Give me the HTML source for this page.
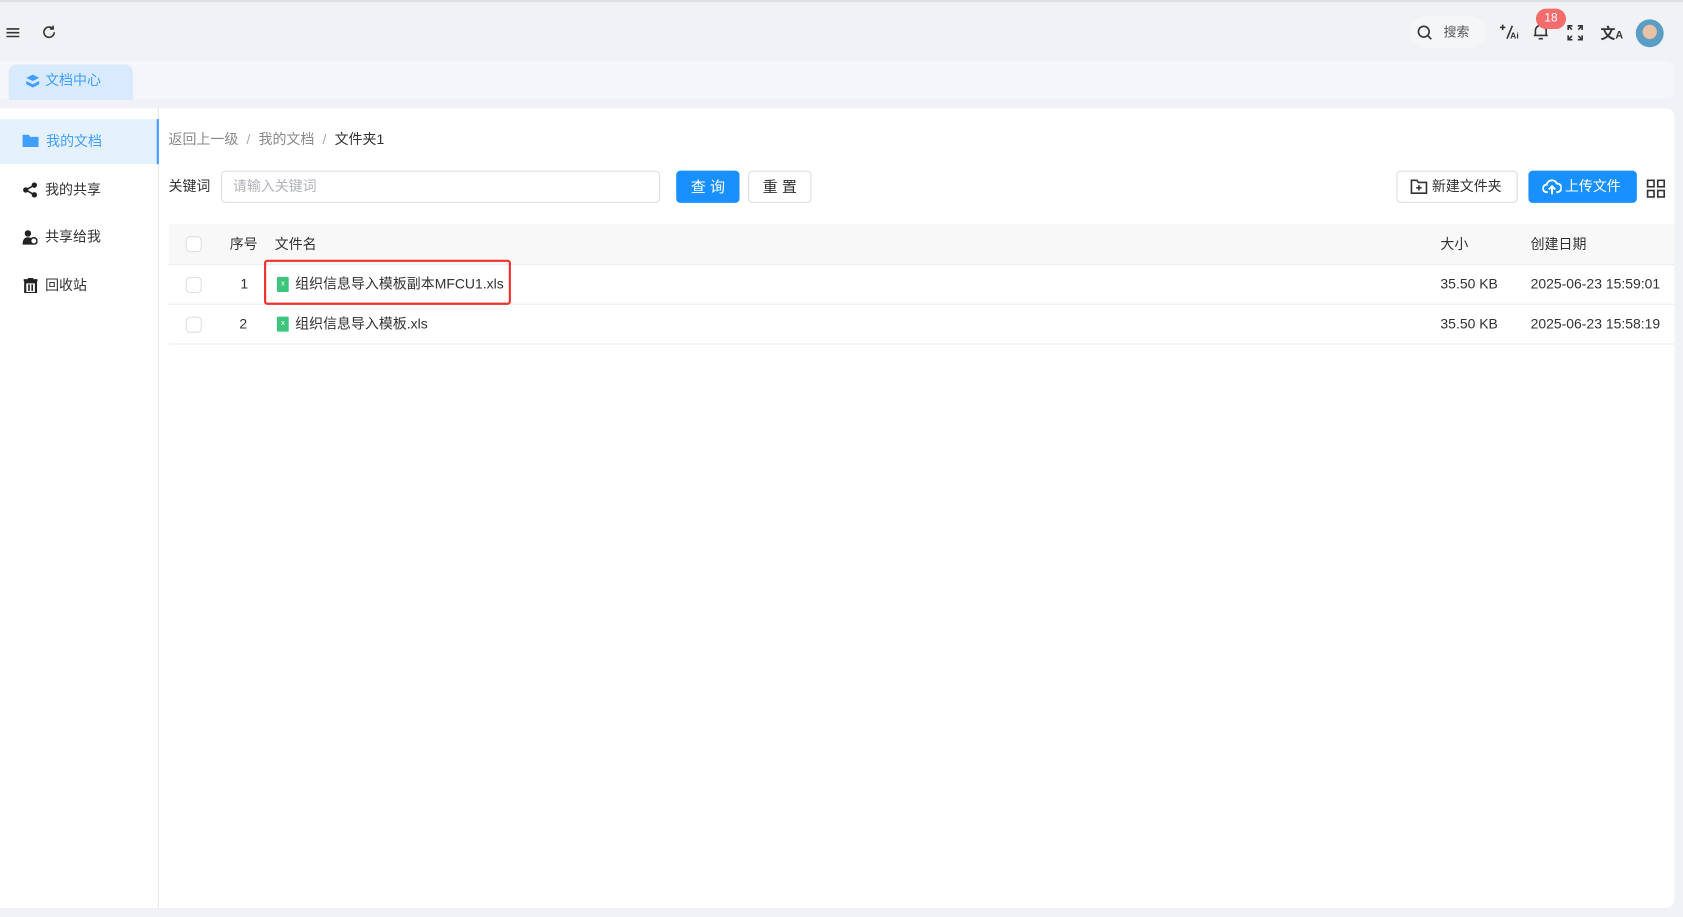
<!DOCTYPE html>
<html><head><meta charset="utf-8"><style>
*{box-sizing:border-box;margin:0;padding:0}
html,body{width:1683px;height:917px;overflow:hidden;background:#f0f2f5}
#w{position:absolute;left:0;top:0;width:1568px;height:854px;transform:scale(1.07334);transform-origin:0 0;font-family:"Liberation Sans","Noto Sans CJK SC",sans-serif;font-size:13px;color:#303133;border-top:2px solid #dcdfe6}
.a{position:absolute;line-height:18px;white-space:nowrap}
.ic{stroke:#333;fill:none;stroke-width:1.5}
</style></head><body><div id="w">
<!-- header -->
<svg class="a" style="left:6px;top:22px" width="13" height="13"><path d="M0 3h12M0 6.5h12M0 10h12" class="ic" stroke="#555" stroke-width="1.3"/></svg>
<svg class="a" style="left:39px;top:21px" width="14" height="14"><path d="M11.5 7a4.8 4.8 0 1 1-1.5-3.5M10.5 1v3h-3" class="ic" stroke="#555" stroke-width="1.3"/></svg>
<div class="a" style="left:1313px;top:13px;width:72px;height:30px;border-radius:15px;background:#f5f6f8"></div>
<svg class="a" style="left:1320px;top:21px" width="15" height="15"><circle cx="6.5" cy="6.5" r="5" class="ic" stroke="#555" stroke-width="1.3"/><path d="M10 10l3.5 3.5" class="ic" stroke="#555" stroke-width="1.3"/></svg>
<div class="a" style="left:1345px;top:19px;font-size:12px;color:#555">搜索</div>
<svg class="a" style="left:1397px;top:18px" width="18" height="18"><path d="M3 3v5M0.5 5.5h5M7 16l5-12" class="ic" stroke-width="1.4"/><text x="10" y="16" font-size="8" font-family="Liberation Sans" fill="#333" font-weight="bold">Ai</text></svg>
<svg class="a" style="left:1428px;top:19px" width="15" height="17"><path d="M2.5 12V7.5a5 5 0 0 1 10 0V12M1 12h13M5.5 15h4" class="ic" stroke-width="1.4"/></svg>
<div class="a" style="left:1431px;top:6px;width:28px;height:19px;border-radius:10px;background:#f56c6c;color:#fff;font-size:11px;text-align:center;line-height:19px">18</div>
<svg class="a" style="left:1460px;top:21px" width="15" height="15"><path d="M1 5V1h4M10 1h4v4M14 10v4h-4M5 14H1v-4M1 1l3.5 3.5M14 1l-3.5 3.5M14 14l-3.5-3.5M1 14l3.5-3.5" class="ic" stroke-width="1.3"/></svg>
<div class="a" style="left:1491px;top:20px;font-size:14px;color:#333;font-weight:bold">文<span style="font-size:10px">A</span></div>
<div class="a" style="left:1524px;top:16px;width:26px;height:26px;border-radius:50%;background:radial-gradient(circle at 50% 45%,#e9c2a6 0 33%,#5a9ec4 36%)"></div>
<!-- tab bar -->
<div class="a" style="left:0;top:55px;width:1560px;height:35px;background:#f5f6f9;border-radius:0 8px 8px 0"></div>
<div class="a" style="left:8px;top:58px;width:116px;height:33px;background:#d9eafc;border-radius:8px 8px 0 0"></div>
<svg class="a" style="left:24px;top:67px" width="13" height="13"><path d="M6.5 0.5l6 3-6 3-6-3z" fill="#409eff"/><path d="M0.5 6.5l6 3 6-3v3l-6 3-6-3z" fill="#409eff"/></svg>
<div class="a" style="left:42px;top:64px;color:#409eff">文档中心</div>
<!-- card -->
<div class="a" style="left:0;top:99px;width:1560px;height:745px;background:#fff;border-radius:0 8px 8px 0"></div>
<div class="a" style="left:147px;top:99px;width:1px;height:745px;background:#e4e7ed"></div>
<div class="a" style="left:0;top:109px;width:148px;height:42px;background:#e6f1fe;border-right:2px solid #409eff"></div>
<svg class="a" style="left:21px;top:123px" width="15" height="12"><path d="M0 0.5h6l1 2h8v9.5H0z" fill="#409eff"/></svg>
<div class="a" style="left:43px;top:121px;color:#409eff">我的文档</div>
<svg class="a" style="left:21px;top:168px" width="14" height="14"><circle cx="3" cy="7" r="2.5" fill="#222"/><circle cx="11" cy="2.5" r="2.5" fill="#222"/><circle cx="11" cy="11.5" r="2.5" fill="#222"/><path d="M3 7l8-4.5M3 7l8 4.5" stroke="#222" stroke-width="1.5"/></svg>
<div class="a" style="left:42px;top:166px">我的共享</div>
<svg class="a" style="left:21px;top:212px" width="14" height="14"><circle cx="5" cy="3.5" r="3" fill="#222"/><path d="M0 14c0-5 2-7 5-7s5 2 5 4v3z" fill="#222"/><circle cx="10.5" cy="10.5" r="3" fill="#fff" stroke="#222" stroke-width="1.5"/></svg>
<div class="a" style="left:42px;top:210px">共享给我</div>
<svg class="a" style="left:22px;top:257px" width="13" height="14"><path d="M0 2h13M4 0.5h5M1.5 4h10v10h-10z" stroke="#222" stroke-width="2" fill="none"/><path d="M5 6v6M8 6v6" stroke="#222" stroke-width="1.5"/></svg>
<div class="a" style="left:42px;top:255px">回收站</div>
<!-- breadcrumb -->
<div class="a" style="left:157px;top:119px;color:#888">返回上一级 <span style="margin:0 4px;color:#aaa">/</span> 我的文档 <span style="margin:0 4px;color:#aaa">/</span> <span style="color:#303133">文件夹1</span></div>
<div class="a" style="left:157px;top:163px">关键词</div>
<div class="a" style="left:206px;top:157px;width:409px;height:30px;border:1px solid #dcdfe6;border-radius:4px;padding:6px 10px;color:#b0b3b8;line-height:16px">请输入关键词</div>
<div class="a" style="left:630px;top:157px;width:59px;height:30px;background:#1890ff;border-radius:4px;color:#fff;text-align:center;line-height:30px;letter-spacing:4px;font-size:14px;padding-left:4px">查询</div>
<div class="a" style="left:697px;top:157px;width:59px;height:30px;border:1px solid #dcdfe6;border-radius:4px;text-align:center;line-height:28px;letter-spacing:4px;font-size:14px;padding-left:4px">重置</div>
<div class="a" style="left:1301px;top:157px;width:113px;height:30px;border:1px solid #dcdfe6;border-radius:4px;line-height:28px;padding-left:32px">新建文件夹</div>
<svg class="a" style="left:1314px;top:165px" width="16" height="14"><path d="M1 1h5l1.5 2H15v10H1z" class="ic" stroke-width="1.3"/><path d="M8 5.5v5M5.5 8h5" class="ic" stroke-width="1.3"/></svg>
<div class="a" style="left:1424px;top:157px;width:101px;height:30px;background:#1890ff;border-radius:4px;color:#fff;line-height:30px;padding-left:34px">上传文件</div>
<svg class="a" style="left:1437px;top:165px" width="18" height="15"><path d="M5 12H4a3.5 3.5 0 0 1 0-7 5 5 0 0 1 9.5-1A3.8 3.8 0 0 1 14 12h-1M9 14V7M6 9.5L9 6.5l3 3" fill="none" stroke="#fff" stroke-width="1.8"/></svg>
<svg class="a" style="left:1534px;top:165px" width="18" height="18"><rect x="1" y="1" width="6" height="6" class="ic" stroke-width="1.6"/><rect x="10.5" y="1" width="6" height="6" class="ic" stroke-width="1.6"/><rect x="1" y="10.5" width="6" height="6" class="ic" stroke-width="1.6"/><rect x="10.5" y="10.5" width="6" height="6" class="ic" stroke-width="1.6"/></svg>
<!-- table -->
<div class="a" style="left:157px;top:207px;width:1403px;height:38px;background:#f8f8f9;border-bottom:1px solid #ebeef5"></div>
<div class="a" style="left:157px;top:245px;width:1403px;height:37px;border-bottom:1px solid #ebeef5"></div>
<div class="a" style="left:157px;top:282px;width:1403px;height:37px;border-bottom:1px solid #ebeef5"></div>
<div class="a" style="left:173px;top:218px;width:15px;height:15px;border:1px solid #dcdfe6;border-radius:4px;background:#fff"></div>
<div class="a" style="left:173px;top:256px;width:15px;height:15px;border:1px solid #dcdfe6;border-radius:4px"></div>
<div class="a" style="left:173px;top:293px;width:15px;height:15px;border:1px solid #dcdfe6;border-radius:4px"></div>
<div class="a" style="left:214px;top:217px">序号</div>
<div class="a" style="left:256px;top:217px">文件名</div>
<div class="a" style="left:1342px;top:217px">大小</div>
<div class="a" style="left:1426px;top:217px">创建日期</div>
<div class="a" style="left:224px;top:254px">1</div>
<div class="a" style="left:223px;top:291px">2</div>
<div class="a" style="left:258px;top:256px;width:11px;height:14px;background:#3ec57d;border-radius:1px;color:#fff;font-size:7px;text-align:center;line-height:14px">x</div>
<div class="a" style="left:258px;top:293px;width:11px;height:14px;background:#3ec57d;border-radius:1px;color:#fff;font-size:7px;text-align:center;line-height:14px">x</div>
<div class="a" style="left:275px;top:254px">组织信息导入模板副本MFCU1.xls</div>
<div class="a" style="left:275px;top:291px">组织信息导入模板.xls</div>
<div class="a" style="left:246px;top:240px;width:230px;height:42px;border:2px solid #f0302a;border-radius:3px"></div>
<div class="a" style="left:1342px;top:254px">35.50 KB</div>
<div class="a" style="left:1342px;top:291px">35.50 KB</div>
<div class="a" style="left:1426px;top:254px">2025-06-23 15:59:01</div>
<div class="a" style="left:1426px;top:291px">2025-06-23 15:58:19</div>
</div></body></html>
